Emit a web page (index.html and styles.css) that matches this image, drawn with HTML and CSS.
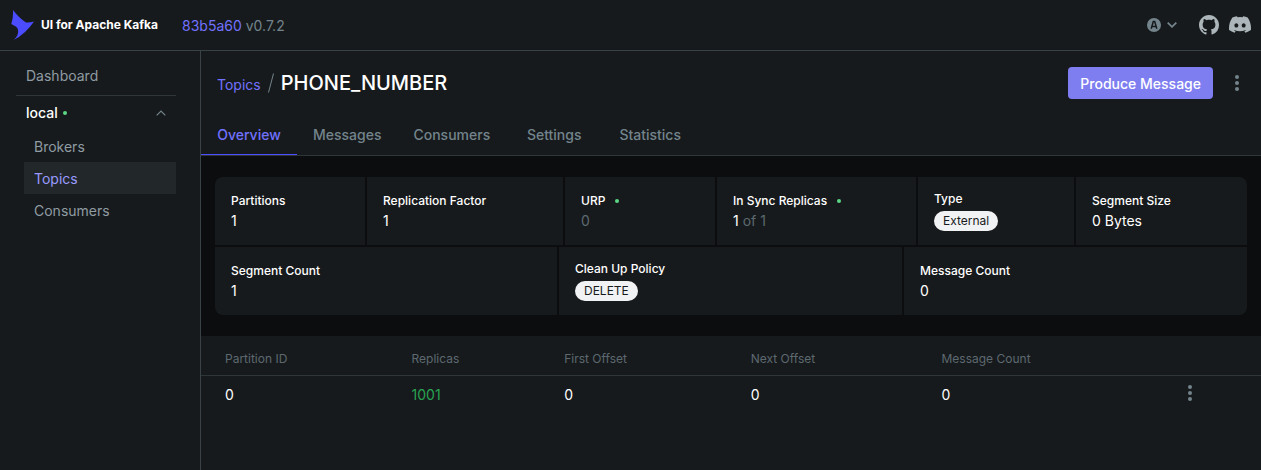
FILE: index.html
```html
<!DOCTYPE html>
<html lang="en">
<head>
<meta charset="utf-8">
<title>UI for Apache Kafka</title>
<link rel="stylesheet" href="styles.css">
</head>
<body>
<header class="navbar">
  <a class="brand" href="#">
    <svg class="brand-logo" viewBox="0 0 24 30" aria-hidden="true"><path d="M2.200 0Q6.500 6.500 14.500 12.300Q18 13 23 11.400Q14.500 24 2.500 30Q7 26.500 7.200 21.500Q7.300 18.300 5.200 16.800L.3 14Q2.200 8 2.200 0Z" fill="#4c4cff"/></svg>
    <span>UI for Apache Kafka</span>
  </a>
  <div class="version"><a href="#">83b5a60</a> <span>v0.7.2</span></div>
  <div class="navbar-tools">
    <button class="theme-button" type="button" aria-label="Theme">
      <svg width="14" height="14" viewBox="0 0 14 14"><circle cx="7" cy="7" r="7" fill="#73848c"/><path d="M4.200 10.700 6.300 3.600H7.700L9.800 10.700M5 8.500H9" fill="none" stroke="#171a1c" stroke-width="1.500"/></svg>
      <svg width="10" height="6" viewBox="0 0 10 6"><path d="M.7.7 5 4.800 9.300.7" fill="none" stroke="#73848c" stroke-width="1.800"/></svg>
    </button>
    <a class="social" href="#" aria-label="GitHub"><svg width="20" height="20" viewBox="0 0 16 16"><path fill="#abb5ba" d="M8 0C3.580 0 0 3.580 0 8c0 3.540 2.290 6.530 5.470 7.590.4.070.55-.17.55-.38 0-.19-.01-.82-.01-1.490-2.010.37-2.530-.49-2.690-.94-.09-.23-.48-.94-.82-1.130-.28-.15-.68-.52-.01-.53.63-.01 1.080.58 1.230.82.72 1.210 1.870.87 2.330.66.07-.52.28-.87.51-1.070-1.780-.2-3.640-.89-3.640-3.950 0-.87.31-1.590.82-2.150-.08-.2-.36-1.020.08-2.120 0 0 .67-.21 2.200.82.64-.18 1.320-.27 2-.27s1.360.09 2 .27c1.530-1.040 2.200-.82 2.200-.82.44 1.100.16 1.920.08 2.120.51.56.82 1.270.82 2.150 0 3.070-1.870 3.750-3.650 3.950.29.25.54.73.54 1.480 0 1.070-.01 1.930-.01 2.200 0 .21.15.46.55.38A8.010 8.010 0 0 0 16 8c0-4.420-3.580-8-8-8z"/></svg></a>
    <a class="social" href="#" aria-label="Discord"><svg width="22" height="18" viewBox="0 0 24 19"><path fill="#abb5ba" d="M20.317 1.370A19.800 19.800 0 0 0 15.432-.145l-.617 1.250a18.300 18.300 0 0 0-5.487 0L8.700-.145A19.700 19.700 0 0 0 3.677 1.370C.533 6.046-.32 10.580.1 15.058a19.900 19.900 0 0 0 5.993 3.030l1.226-1.994a13 13 0 0 1-1.872-.892l.372-.292a14.200 14.200 0 0 0 12.362 0l.372.292a12.300 12.300 0 0 1-1.873.892l1.226 1.993a19.800 19.800 0 0 0 6.002-3.030c.5-5.177-.838-9.674-3.591-13.687zM8.020 12.330c-1.183 0-2.157-1.085-2.157-2.419s.956-2.419 2.157-2.419c1.210 0 2.176 1.096 2.157 2.420 0 1.333-.956 2.418-2.157 2.418zm7.975 0c-1.183 0-2.157-1.085-2.157-2.419s.955-2.419 2.157-2.419c1.210 0 2.176 1.096 2.157 2.420 0 1.333-.946 2.418-2.157 2.418z"/></svg></a>
  </div>
</header>
<div class="layout">
  <nav class="sidebar" aria-label="Main">
    <a class="side-link" href="#">Dashboard</a>
    <button class="cluster" type="button" aria-expanded="true">
      <span>local</span><i class="dot"></i>
      <svg class="cluster-arrow" width="10" height="6" viewBox="0 0 10 6"><path d="M.7 5.300 5 1l4.300 4.300" fill="none" stroke="#73848c" stroke-width="1.200"/></svg>
    </button>
    <ul class="cluster-menu">
      <li><a href="#">Brokers</a></li>
      <li><a class="is-active" href="#" aria-current="page">Topics</a></li>
      <li><a href="#">Consumers</a></li>
    </ul>
  </nav>
  <main class="content">
    <div class="page-heading">
      <div class="breadcrumb"><a href="#">Topics</a><svg width="8" height="20" viewBox="0 0 8 20" aria-hidden="true"><path d="M1.500 19.500 6.500.5" stroke="#73848c"/></svg><h1>PHONE_NUMBER</h1></div>
      <div class="page-actions">
        <button class="primary" type="button">Produce Message</button>
        <button class="kebab" type="button" aria-label="Topic actions"><svg width="4" height="16" viewBox="0 0 4 16" fill="#73848c"><circle cx="2" cy="2" r="2"/><circle cx="2" cy="8" r="2"/><circle cx="2" cy="14" r="2"/></svg></button>
      </div>
    </div>
    <nav class="tabs" aria-label="Topic">
      <a class="is-active" href="#">Overview</a><a href="#">Messages</a><a href="#">Consumers</a><a href="#">Settings</a><a href="#">Statistics</a>
    </nav>
    <section class="metrics">
      <div class="metric-row metric-row-six">
        <div class="metric"><h2>Partitions</h2><p>1</p></div>
        <div class="metric"><h2>Replication Factor</h2><p>1</p></div>
        <div class="metric"><h2>URP<i class="dot"></i></h2><p class="muted">0</p></div>
        <div class="metric"><h2>In Sync Replicas<i class="dot"></i></h2><p>1<span class="muted"> of 1</span></p></div>
        <div class="metric"><h2>Type</h2><span class="tag">External</span></div>
        <div class="metric"><h2>Segment Size</h2><p>0 Bytes</p></div>
      </div>
      <div class="metric-row metric-row-three">
        <div class="metric"><h2>Segment Count</h2><p>1</p></div>
        <div class="metric"><h2>Clean Up Policy</h2><span class="tag">DELETE</span></div>
        <div class="metric"><h2>Message Count</h2><p>0</p></div>
      </div>
    </section>
    <table class="partitions">
      <colgroup><col class="col-id"><col class="col-replicas"><col class="col-first"><col class="col-next"><col class="col-count"><col class="col-menu"></colgroup>
      <thead><tr><th>Partition ID</th><th>Replicas</th><th>First Offset</th><th>Next Offset</th><th>Message Count</th><th></th></tr></thead>
      <tbody><tr><td>0</td><td class="leader">1001</td><td>0</td><td>0</td><td>0</td><td class="row-menu"><button class="kebab" type="button" aria-label="Partition actions"><svg width="4" height="16" viewBox="0 0 4 16" fill="#73848c"><circle cx="2" cy="2" r="2"/><circle cx="2" cy="8" r="2"/><circle cx="2" cy="14" r="2"/></svg></button></td></tr></tbody>
    </table>
  </main>
</div>
</body>
</html>
```
FILE: styles.css
```css
* { box-sizing: border-box; }
body {
  margin: 0;
  min-height: 100vh;
  display: flex;
  flex-direction: column;
  background: #171a1c;
  color: #fff;
  font: 400 14px/20px Inter, "Liberation Sans", sans-serif;
}
a { color: inherit; text-decoration: none; }
button { font: inherit; color: inherit; background: none; border: 0; padding: 0; cursor: pointer; }
h1, h2, p, ul { margin: 0; padding: 0; }
ul { list-style: none; }
svg { display: block; flex: none; }
.dot { width: 4px; height: 4px; border-radius: 50%; background: #5cd685; }

.navbar {
  display: flex;
  align-items: center;
  height: 51px;
  padding: 0 10px 0 11px;
  border-bottom: 1px solid #394246;
}
.brand { display: flex; align-items: center; gap: 6px; font-size: 12px; font-weight: 700; }
.brand-logo { width: 24px; height: 30px; }
.version { margin-left: 24px; padding-top: 2px; color: #73848c; }
.version a { color: #7171ff; }
.navbar-tools { display: flex; align-items: center; margin-left: auto; gap: 10px; }
.theme-button { display: flex; align-items: center; gap: 6px; margin-right: 12px; }

.layout { display: flex; flex: 1; }
.sidebar { width: 201px; flex: none; padding: 6px 24px 0 16px; border-right: 1px solid #394246; color: #8f9ca3; }
.side-link { display: block; padding: 9px 10px; }
.cluster {
  display: flex;
  align-items: center;
  gap: 5px;
  width: 100%;
  height: 35px;
  padding: 0 10px;
  border-top: 1px solid #2f3639;
  color: #fff;
  font-weight: 500;
}
.cluster-arrow { margin-left: auto; }
.cluster-menu { padding-left: 8px; }
.cluster-menu a { display: block; padding: 7px 10px 5px; }
.cluster-menu .is-active { background: #22282a; color: #9999ff; }

.content { flex: 1; min-width: 0; }
.page-heading { display: flex; align-items: center; justify-content: space-between; height: 64px; padding: 0 14px 0 16px; }
.breadcrumb { display: flex; align-items: center; gap: 6px; color: #7171ff; }
.breadcrumb a { padding-top: 4px; }
.breadcrumb h1 { color: #fff; font-size: 20px; line-height: 32px; font-weight: 500; }
.page-actions { display: flex; align-items: center; gap: 14px; }
.primary { height: 32px; padding: 2px 12px 0; border-radius: 4px; background: #7e7ef1; font-weight: 500; }
.kebab { display: block; padding: 0 8px; }
.tabs { display: flex; height: 41px; border-bottom: 1px solid #2f3639; color: #73848c; font-weight: 500; }
.tabs a { min-width: 96px; padding: 10px 16px 9px; border-bottom: 1px solid transparent; text-align: center; }
.tabs .is-active { color: #7171ff; border-color: #4c4cff; }

.metrics { display: grid; gap: 2px; padding: 21px 14px; background: #0b0d0e; }
.metric-row { display: grid; gap: 2px; }
.metric-row-six { grid-template-columns: 150fr 196fr 150fr 199fr 156fr 171fr; }
.metric-row-three { grid-template-columns: 342fr 343fr 343fr; }
.metric { display: flex; flex-direction: column; justify-content: center; align-items: flex-start; height: 68px; padding: 0 16px; background: #171a1c; }
.metric-row-six .metric:first-child { border-top-left-radius: 8px; }
.metric-row-six .metric:last-child { border-top-right-radius: 8px; }
.metric-row-three .metric:first-child { border-bottom-left-radius: 8px; }
.metric-row-three .metric:last-child { border-bottom-right-radius: 8px; }
.metric h2 { display: flex; align-items: center; gap: 10px; font-size: 12px; line-height: 20px; font-weight: 500; }
.muted { color: #5c6970; }
.tag { margin: 2px 0; padding: 0 9px; border-radius: 10px; background: #f1f2f3; color: #171a1c; font-size: 12px; line-height: 20px; }

.partitions { width: 100%; table-layout: fixed; border-spacing: 0; text-align: left; }
.partitions th { height: 40px; padding: 6px 0 0 24px; border-bottom: 1px solid #2f3639; color: #5c6970; font-size: 12px; font-weight: 400; }
.partitions td { height: 38px; padding: 0 0 0 24px; }
.partitions .leader { color: #29a352; }
.partitions .row-menu { padding: 0 61px 4px 0; }
.row-menu .kebab { margin-left: auto; }
.col-id { width: 17.6%; }
.col-replicas { width: 14.4%; }
.col-first { width: 17.6%; }
.col-next { width: 18%; }
.col-count { width: 16%; }
```
